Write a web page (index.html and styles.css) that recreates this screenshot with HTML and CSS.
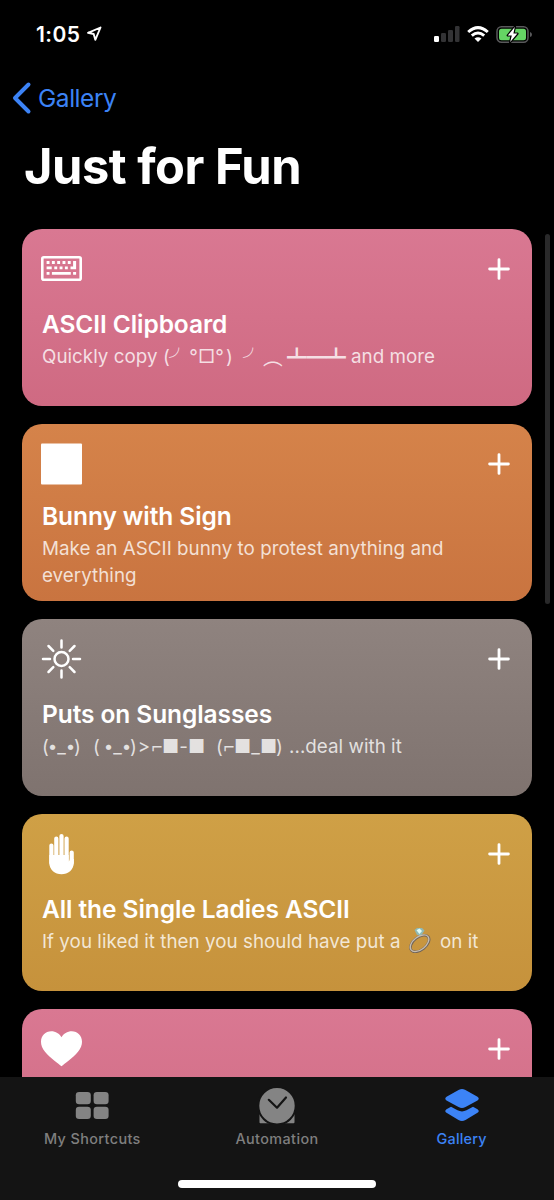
FILE: index.html
```html
<!DOCTYPE html>
<html lang="en">
<head>
<meta charset="utf-8">
<title>Just for Fun</title>
<link rel="stylesheet" href="styles.css">
</head>
<body>
<div class="screen">
  <header class="status">
    <div class="clock"><span class="time">1:05</span>
      <svg class="location" width="16" height="16" viewBox="0 0 16 16"><path d="M14.500 1.500 L2 6.800 L7.700 8 L9.300 13.800 Z" fill="none" stroke="#fff" stroke-width="1.900" stroke-linejoin="round"/></svg>
    </div>
    <div class="indicators">
      <svg width="26" height="17" viewBox="0 0 26 17"><rect x="0" y="10" width="5" height="6" rx="1.2" fill="#fff"/><g fill="#333335"><rect x="7" y="7" width="5" height="9" rx="1.2"/><rect x="14" y="4" width="5" height="12" rx="1.2"/><rect x="21" y="0" width="4.500" height="16" rx="1.2"/></g></svg>
      <svg class="wifi" width="22" height="17" viewBox="0 0 22 17"><g fill="none" stroke="#fff" stroke-width="3"><path d="M1.200 6 Q11 -2.700 20.800 6"/><path d="M4.800 9.600 Q11 4.300 17.200 9.600"/></g><path d="M7.500 12.500 Q11 9.800 14.500 12.500 L11 16 Z" fill="#fff"/></svg>
      <svg class="battery" width="37" height="19" viewBox="0 0 37 19"><rect x="1" y="1.700" width="31" height="15.600" rx="4.500" fill="none" stroke="#59595b" stroke-width="1.500"/><rect x="3" y="3.800" width="27" height="11.500" rx="2.500" fill="#65d464"/><path d="M34 7 Q36 7.500 36 9.500 Q36 11.500 34 12Z" fill="#59595b"/><path d="M18.800 2 L11.800 10.400 H15.800 L14.200 17 L21.400 8.600 H17.400Z" fill="#fff" stroke="#000" stroke-width="2.400" stroke-linejoin="round" paint-order="stroke"/></svg>
    </div>
  </header>
  <nav class="back">
    <svg width="20" height="34" viewBox="0 0 20 34"><path d="M16.500 3.500 L3 17 L16.500 30.500" fill="none" stroke="#3c83f6" stroke-width="4" stroke-linecap="round" stroke-linejoin="round"/></svg>
    <span class="back-label">Gallery</span>
  </nav>
  <h1 class="heading">Just for Fun</h1>

  <main class="list">
    <article class="card pink">
      <div class="card-top">
        <svg class="icon" width="42" height="42" viewBox="0 0 42 42"><rect x="1.300" y="9.200" width="38.400" height="22.600" rx="1.500" fill="none" stroke="#fff" stroke-width="2.600"/><g fill="#fff"><path d="M5.600 13h2.900v2.900H5.600zM10.900 13h2.900v2.900h-2.900zM16.200 13h2.900v2.900h-2.900zM21.500 13h2.900v2.900h-2.900zM26.800 13h2.900v2.900h-2.900zM32.100 13h3v8.300h-5.600v-2.900h2.600zM5.600 18.400h5.100v2.900H5.600zM13.300 18.400h2.900v2.900h-2.900zM18.600 18.400h2.900v2.900h-2.900zM23.900 18.400h2.900v2.900h-2.900zM5.600 23.900h2.900v2.900H5.600zM10.900 23.900h18.900v2.900H10.900zM32.100 23.900h3v2.900h-3z"/></g></svg>
        <svg class="plus" width="24" height="24" viewBox="0 0 24 24"><path d="M12 2.600V21.400M2.600 12H21.400" stroke="#fff" stroke-width="2.800" stroke-linecap="round"/></svg>
      </div>
      <h2 class="title">ASCII Clipboard</h2>
      <p class="sub s1"><span class="w-copy">Quickly copy (</span><span class="wide arc">╯</span><span class="deg">°</span><span class="mouth">□</span><span class="deg">°</span><span class="close">)</span><span class="wide arc">╯</span><span class="wide">︵</span><span class="wide table">┻━┻</span><span>and more</span></p>
    </article>

    <article class="card orange two-line">
      <div class="card-top">
        <svg class="icon" width="42" height="42" viewBox="0 0 42 42"><rect x="0" y="0.500" width="41" height="41" rx="1" fill="#fff"/></svg>
        <svg class="plus" width="24" height="24" viewBox="0 0 24 24"><path d="M12 2.600V21.400M2.600 12H21.400" stroke="#fff" stroke-width="2.800" stroke-linecap="round"/></svg>
      </div>
      <h2 class="title">Bunny with Sign</h2>
      <p class="sub s2">Make an ASCII bunny to protest anything and<br>everything</p>
    </article>

    <article class="card gray">
      <div class="card-top">
        <svg class="icon" width="42" height="42" viewBox="0 0 42 42"><g fill="none" stroke="#fff" stroke-width="2.500" stroke-linecap="round"><circle cx="20.500" cy="21" r="7"/><path d="M20.500 2.500V9.500M20.500 32.500V39.500M2 21H9M32 21H39M7.500 8L12.300 12.800M28.700 29.200L33.500 34M7.500 34L12.300 29.200M28.700 12.800L33.500 8"/></g></svg>
        <svg class="plus" width="24" height="24" viewBox="0 0 24 24"><path d="M12 2.600V21.400M2.600 12H21.400" stroke="#fff" stroke-width="2.800" stroke-linecap="round"/></svg>
      </div>
      <h2 class="title">Puts on Sunglasses</h2>
      <p class="sub faces"><span class="c7">(</span><span class="c7 dot">•</span><span class="c11">_</span><span class="c7 dot">•</span><span class="c7">)</span><span class="gap12"></span><span class="c7">(</span><span class="gap5"></span><span class="c7 dot">•</span><span class="c11">_</span><span class="c7 dot">•</span><span class="c7">)</span><span class="c14">&gt;</span><span class="c12">⌐</span><span class="block">■</span><span class="c11">-</span><span class="block">■</span><span class="gap12"></span><span class="c7">(</span><span class="c12">⌐</span><span class="block">■</span><span class="c11">_</span><span class="block">■</span><span class="c7">)</span><span class="deal">...deal with it</span></p>
    </article>

    <article class="card gold">
      <div class="card-top">
        <svg class="icon" width="42" height="42" viewBox="0 0 42 42"><g stroke="#fff" stroke-width="4.200" stroke-linecap="round"><path d="M10.400 12.500V30M15.300 5.500V28M20.500 3V28M25.600 5.500V28M30.700 19.500V30"/></g><path d="M8.300 22H27.700V28.500Q28.700 27.500 29 26H32.800V29.500C32.800 37 27 41.300 20.500 41.300S8.300 37 8.300 29.500Z" fill="#fff"/></svg>
        <svg class="plus" width="24" height="24" viewBox="0 0 24 24"><path d="M12 2.600V21.400M2.600 12H21.400" stroke="#fff" stroke-width="2.800" stroke-linecap="round"/></svg>
      </div>
      <h2 class="title">All the Single Ladies ASCII</h2>
      <p class="sub s4"><span class="w-put">If you liked it then you should have put a</span><svg class="ring" width="24" height="26" viewBox="0 0 24 26"><g fill="none" transform="rotate(-38 12 16)"><ellipse cx="11.500" cy="16.300" rx="10.800" ry="6.300" stroke="#6e6258" stroke-width="2.600"/><ellipse cx="11.500" cy="15.900" rx="10.800" ry="6.300" stroke="#c6bdb0" stroke-width="1.300"/></g><path d="M6.500 3 L9 1 H14 L16.500 3.500 L13.500 8 H9Z" fill="#8fb9b5"/><path d="M8.500 3.300 L11.500 1.500 L14 4 L11.500 7Z" fill="#dffcf8"/></svg><span>on it</span></p>
    </article>

    <article class="card pink">
      <div class="card-top">
        <svg class="icon" width="42" height="42" viewBox="0 0 42 42"><path d="M20.500 38.200C17.500 35.500 9.500 30.500 4 23.700C1.200 20.200 0 17.200 0 13.700C0 7.900 4.500 3.300 10.200 3.300C14.700 3.300 18.500 5.700 20.500 9.300C22.500 5.700 26.300 3.300 30.800 3.300C36.500 3.300 41 7.900 41 13.700C41 17.200 39.800 20.200 37 23.700C31.500 30.500 23.500 35.500 20.500 38.200Z" fill="#fff"/></svg>
        <svg class="plus" width="24" height="24" viewBox="0 0 24 24"><path d="M12 2.600V21.400M2.600 12H21.400" stroke="#fff" stroke-width="2.800" stroke-linecap="round"/></svg>
      </div>
    </article>
  </main>

  <footer class="tabs">
    <div class="tab-row">
      <div class="tab">
        <svg width="38" height="38" viewBox="0 0 38 38"><g fill="#848484"><rect x="2.800" y="5" width="15" height="12.300" rx="3.300"/><rect x="20.600" y="5" width="15" height="12.300" rx="3.300"/><rect x="2.800" y="19.800" width="15" height="12.300" rx="3.300"/><rect x="20.600" y="19.800" width="15" height="12.300" rx="3.300"/></g></svg>
        <span>My Shortcuts</span>
      </div>
      <div class="tab">
        <svg width="38" height="38" viewBox="0 0 38 38"><path d="M1.500 27.500V35.300Q1.500 36.200 2.400 36.200H35.600Q36.500 36.200 36.500 35.300V27.500Z" fill="#848484"/><circle cx="19" cy="18.700" r="18.700" fill="#848484" stroke="#141414" stroke-width="2"/><path d="M10.800 12.800L19 20.700L28 10.500" fill="none" stroke="#141414" stroke-width="2.200" stroke-linecap="round" stroke-linejoin="round"/></svg>
        <span>Automation</span>
      </div>
      <div class="tab active">
        <svg width="38" height="38" viewBox="0 0 38 38"><g fill="#3c83f6"><path d="M16 2.700Q19 1.100 22 2.700L34.500 9.800Q37 11.700 34.500 13.600L22.500 20Q19 22 15.500 20L3.500 13.600Q1 11.700 3.500 9.800Z"/><path d="M8 19.800L14.500 23.300Q19 25.500 23.500 23.300L30 19.800L34.500 22.200Q37 24 34.500 25.800L22.500 32.900Q19 34.900 15.500 32.900L3.500 25.800Q1 24 3.500 22.200Z"/></g></svg>
        <span>Gallery</span>
      </div>
    </div>
    <div class="home"></div>
  </footer>
  <div class="scrollbar"></div>
</div>
</body>
</html>
```

FILE: styles.css
```css
* { box-sizing: border-box; }
body {
  margin: 0;
  background: #000;
  color: #fff;
  font-family: Inter, "Liberation Sans", sans-serif;
}
.screen {
  position: relative;
  width: 554px;
  height: 1200px;
  overflow: hidden;
  display: flex;
  flex-direction: column;
}
svg { display: block; flex: none; }

.status {
  height: 68px;
  padding: 0 21px 0 36px;
  display: flex;
  justify-content: space-between;
  align-items: center;
}
.clock, .indicators { display: flex; align-items: center; }
.time { font-size: 21px; font-weight: 600; line-height: 26px; width: 50px; letter-spacing: 0.4px; padding-top: 1px; }
.location { margin-top: -1px; }
.wifi { margin: 0 7px; }

.back {
  height: 60px;
  padding-left: 12px;
  display: flex;
  align-items: center;
}
.back-label { font-size: 24.500px; letter-spacing: -0.45px; margin-left: 6px; color: #3c83f6; }
.heading {
  margin: 0;
  height: 101px;
  padding: 8px 0 0 24px;
  font-size: 48.800px;
  letter-spacing: -0.5px;
  line-height: 62px;
  font-weight: 700;
}

.list {
  flex: 1;
  min-height: 0;
  overflow: hidden;
  padding: 0 22px;
  display: flex;
  flex-direction: column;
  gap: 18px;
}
.card {
  flex: none;
  height: 177px;
  border-radius: 20px;
  padding: 19px 20px 0 19px;
}
.pink { background: linear-gradient(#d97892, #cf6a82); }
.orange { background: linear-gradient(#d5834a, #c97440); }
.gray { background: linear-gradient(#8f837f, #7f736f); }
.gold { background: linear-gradient(#cfa046, #c6923c); }
.card-top { display: flex; justify-content: space-between; height: 42px; }
.plus { margin-top: 9px; margin-right: 1px; }
.title {
  margin: 18px 0 0 1px;
  font-size: 24.500px;
  letter-spacing: -0.08px;
  line-height: 32px;
  font-weight: 600;
  white-space: nowrap;
}
.sub {
  margin: 3px 0 0 1px;
  font-size: 18.800px;
  letter-spacing: 0.03px;
  line-height: 27px;
  color: rgba(255, 255, 255, 0.78);
  white-space: nowrap;
}
.two-line .title { margin-top: 15px; }
.s1, .s4, .faces { display: flex; }
.faces span, .s1 span { flex: none; }
.w-copy { width: 127px; }
.w-put { width: 366px; }
.wide { width: 20px; font-family: "Noto Sans CJK JP", sans-serif; font-size: 19.700px; }
.arc { color: rgba(255, 255, 255, 0.75); }
.deg { width: 9px; text-align: center; }
.mouth { width: 17px; text-align: center; }
.close { width: 19px; padding-left: 2px; }
.table { width: 68px; padding-left: 4px; letter-spacing: 0; }
.faces span { display: flex; justify-content: center; }
.c7 { width: 7px; }
.faces .dot { font-size: 17px; }
.c11 { width: 11px; }
.c12 { width: 12px; }
.c14 { width: 14px; }
.block { width: 15px; }
.gap5 { width: 5px; }
.gap12 { width: 12px; }
.faces .deal { margin-left: 6px; }
.ring { margin-right: 8px; margin-top: -1px; }

.tabs {
  flex: none;
  height: 123px;
  background: #141414;
  display: flex;
  flex-direction: column;
  align-items: center;
  justify-content: space-between;
  padding: 10px 0 12px;
}
.tab-row { display: grid; grid-template-columns: repeat(3, 184.670px); }
.tab {
  display: flex;
  flex-direction: column;
  align-items: center;
  gap: 4px;
  font-size: 14.400px;
  letter-spacing: 0.4px;
  line-height: 20px;
  font-weight: 500;
  color: #7f7f7f;
}
.active { color: #3c83f6; letter-spacing: 0.2px; }
.home { width: 198px; height: 8px; border-radius: 4px; background: #fff; }
.scrollbar {
  position: absolute;
  left: 545px;
  top: 234px;
  width: 5px;
  height: 370px;
  border-radius: 3px;
  background: #29292a;
}
```
